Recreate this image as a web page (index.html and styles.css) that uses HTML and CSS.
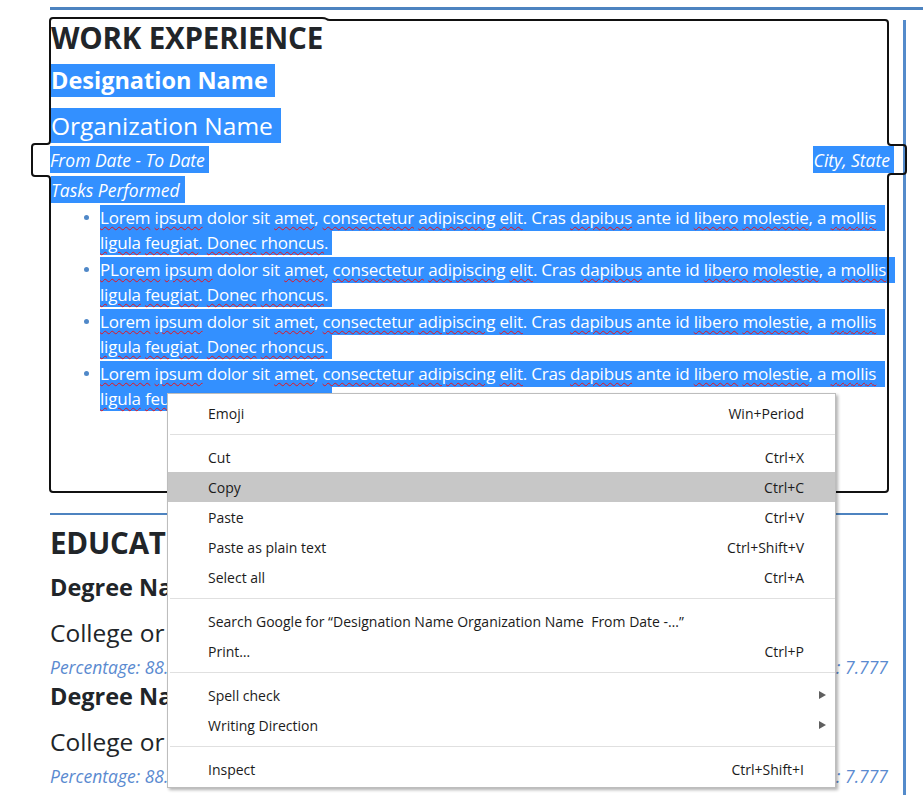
FILE: index.html
```html
<!DOCTYPE html>
<html lang="en">
<head>
<meta charset="utf-8">
<title>Resume editor</title>
<link rel="stylesheet" href="styles.css">
</head>
<body>
<div class="page">
  <div class="rule-top"></div>
  <div class="cols">
    <main class="main">
      <div class="editable">
        <h3 class="h-sec">WORK EXPERIENCE</h3>
        <h4 class="title hl pad-d">Designation Name</h4>
        <div class="org hl pad-o">Organization Name</div>
        <div class="date-row">
          <span class="it hl pad-f">From Date - To Date</span>
          <span class="it hl pad-c">City, State</span>
        </div>
        <div class="it hl pad-t gap3">Tasks Performed</div>
        <ul class="tasks">
          <li><span class="ln ln1"><span class="sp">Lorem</span> <span class="sp">ipsum</span> dolor sit <span class="sp">amet</span>, <span class="sp">consectetur</span> <span class="sp">adipiscing</span> <span class="sp">elit</span>. Cras <span class="sp">dapibus</span> ante id <span class="sp">libero</span> <span class="sp">molestie</span>, a <span class="sp">mollis</span></span><span class="ln ln2"><span class="sp">ligula</span> <span class="sp">feugiat</span>. <span class="sp">Donec</span> <span class="sp">rhoncus</span>.</span></li>
          <li><span class="ln ln1"><span class="sp">PLorem</span> <span class="sp">ipsum</span> dolor sit <span class="sp">amet</span>, <span class="sp">consectetur</span> <span class="sp">adipiscing</span> <span class="sp">elit</span>. Cras <span class="sp">dapibus</span> ante id <span class="sp">libero</span> <span class="sp">molestie</span>, a <span class="sp">mollis</span></span><span class="ln ln2"><span class="sp">ligula</span> <span class="sp">feugiat</span>. <span class="sp">Donec</span> <span class="sp">rhoncus</span>.</span></li>
          <li><span class="ln ln1"><span class="sp">Lorem</span> <span class="sp">ipsum</span> dolor sit <span class="sp">amet</span>, <span class="sp">consectetur</span> <span class="sp">adipiscing</span> <span class="sp">elit</span>. Cras <span class="sp">dapibus</span> ante id <span class="sp">libero</span> <span class="sp">molestie</span>, a <span class="sp">mollis</span></span><span class="ln ln2"><span class="sp">ligula</span> <span class="sp">feugiat</span>. <span class="sp">Donec</span> <span class="sp">rhoncus</span>.</span></li>
          <li><span class="ln ln1"><span class="sp">Lorem</span> <span class="sp">ipsum</span> dolor sit <span class="sp">amet</span>, <span class="sp">consectetur</span> <span class="sp">adipiscing</span> <span class="sp">elit</span>. Cras <span class="sp">dapibus</span> ante id <span class="sp">libero</span> <span class="sp">molestie</span>, a <span class="sp">mollis</span></span><span class="ln ln2"><span class="sp">ligula</span> <span class="sp">feugiat</span>. <span class="sp">Donec</span> <span class="sp">rhoncus</span>.</span></li>
        </ul>
        <svg class="outline" width="923" height="520" viewBox="0 0 923 520" aria-hidden="true">
          <path d="M53 18 H322 Q325 18 326.5 19 Q327.5 20 330 20 H885 Q888 20 888 23 V142 Q888 145 891 145 H903 Q906 145 906 148 V171 Q906 174 903 174 H891 Q888 174 888 177 V489 Q888 492 885 492 H53 Q50 492 50 489 V179 Q50 176 47 176 H35 Q32 176 32 173 V147 Q32 144 35 144 H47 Q50 144 50 141 V21 Q50 18 53 18 Z" fill="none" stroke="#111" stroke-width="2"/>
        </svg>
      </div>

      <section class="edu">
        <h3 class="h-sec">EDUCATION</h3>
        <div class="entry">
          <h4 class="title">Degree Name</h4>
          <div class="org">College or University Name</div>
          <div class="pct"><span>Percentage: 88.88%</span><span>CGPA: 7.777</span></div>
        </div>
        <div class="entry">
          <h4 class="title">Degree Name</h4>
          <div class="org">College or University Name</div>
          <div class="pct"><span>Percentage: 88.88%</span><span>CGPA: 7.777</span></div>
        </div>
      </section>
    </main>
    <aside class="side"></aside>
  </div>

  <div class="menu">
    <div class="mi"><span>Emoji</span><span>Win+Period</span></div>
    <div class="sep"></div>
    <div class="mi"><span>Cut</span><span>Ctrl+X</span></div>
    <div class="mi hot"><span>Copy</span><span>Ctrl+C</span></div>
    <div class="mi"><span>Paste</span><span>Ctrl+V</span></div>
    <div class="mi"><span>Paste as plain text</span><span>Ctrl+Shift+V</span></div>
    <div class="mi"><span>Select all</span><span>Ctrl+A</span></div>
    <div class="sep"></div>
    <div class="mi"><span>Search Google for “Designation Name Organization Name  From Date -…”</span></div>
    <div class="mi"><span>Print…</span><span>Ctrl+P</span></div>
    <div class="sep"></div>
    <div class="mi"><span>Spell check</span><span class="arrow"></span></div>
    <div class="mi"><span>Writing Direction</span><span class="arrow"></span></div>
    <div class="sep"></div>
    <div class="mi"><span>Inspect</span><span>Ctrl+Shift+I</span></div>
  </div>
</div>
</body>
</html>
```

FILE: styles.css
```css
html, body {
  margin: 0;
  padding: 0;
  background: #fff;
}
body {
  font-family: "Open Sans", "Noto Sans", sans-serif;
  color: #212529;
}
.page {
  position: relative;
  box-sizing: border-box;
  height: 795px;
  overflow: hidden;
  padding: 7px 0 0 49px;
  display: flex;
  flex-direction: column;
}
.rule-top {
  flex: none;
  height: 3px;
  margin-left: 1px;
  background: #4d83c0;
}
.cols {
  flex: 1;
  display: flex;
  margin-top: 7px;
}
.main {
  flex: none;
  width: 840px;
}
.side {
  flex: none;
  width: 3px;
  margin: 3px 0 0 14px;
  background: #548bcb;
}

/* editable work block */
.editable {
  position: relative;
  box-sizing: border-box;
  height: 476px;
  padding: 2px 0 0 2px;
}
.outline {
  position: absolute;
  left: -49px;
  top: -17px;
  overflow: visible;
  pointer-events: none;
}
.h-sec {
  margin: 0;
  font-size: 29.5px;
  font-weight: 700;
  letter-spacing: -0.2px;
  line-height: 38px;
  color: #212529;
}
.title {
  margin: 7px 0 0;
  font-size: 23.5px;
  font-weight: 700;
  line-height: 33px;
}
.org {
  margin-top: 11px;
  font-size: 24.5px;
  font-weight: 400;
  line-height: 35px;
}
.it {
  display: block;
  font-size: 17.5px;
  font-style: italic;
  line-height: 26px;
  padding-top: 1px;
}
.hl {
  width: max-content;
  background: #3390ff;
  color: #fff;
}
.pad-d { padding-right: 7px; }
.pad-o { padding-right: 8px; }
.pad-f { padding-right: 4px; }
.pad-c { padding-right: 4px; padding-left: 1px; }
.pad-t { padding-right: 5px; }
.gap3 { margin-top: 3px; }

.date-row {
  display: flex;
  justify-content: space-between;
  margin: 3px -5px 0 -1px;
}

.tasks {
  margin: 2px 0 0;
  padding: 0 0 0 49px;
  list-style: none;
}
.tasks li {
  position: relative;
  margin-bottom: 2px;
  font-size: 17px;
  letter-spacing: -0.2px;
}
.tasks li::before {
  content: "";
  position: absolute;
  left: -16px;
  top: 10px;
  width: 5px;
  height: 5px;
  border-radius: 50%;
  background: #5088c8;
}
.ln {
  display: block;
  width: max-content;
  white-space: nowrap;
  background: #3390ff;
  color: #fff;
}
.ln1 { line-height: 26px; padding-right: 9px; }
.ln2 { line-height: 24px; padding-right: 4px; }
.sp {
  text-decoration: underline wavy #e8141c;
  text-decoration-thickness: 1.3px;
  text-underline-offset: 2px;
}

/* education */
.edu {
  width: 838px;
  margin: 20px 0 0 1px;
  border-top: 2px solid #4d83c0;
}
.edu .h-sec { margin-top: 9px; }
.edu .title { margin-top: 9px; }
.edu .entry + .entry .title { margin-top: 0; }
.pct {
  display: flex;
  justify-content: space-between;
  margin-top: 3px;
  padding-top: 1px;
  font-size: 17.5px;
  font-style: italic;
  line-height: 26px;
  color: #5a8ad0;
}

/* context menu */
.menu {
  position: absolute;
  left: 167px;
  top: 393px;
  width: 669px;
  box-sizing: border-box;
  padding: 4px 0 3px;
  border: 1px solid #bdbdbd;
  background: #fff;
  box-shadow: 2px 2px 3px rgba(0, 0, 0, 0.3);
  font-family: "Open Sans", "Noto Sans", sans-serif;
  font-size: 14px;
  color: #1b1b1b;
}
.mi {
  display: flex;
  justify-content: space-between;
  align-items: center;
  height: 30px;
  padding: 0 31px 0 40px;
  white-space: pre;
}
.mi.hot {
  background: #c7c7c7;
}
.sep {
  height: 1px;
  margin: 6px 0 7px 2px;
  background: #e0e0e0;
}
.arrow {
  width: 0;
  height: 0;
  margin-right: -22px;
  border-left: 7px solid #5f5f5f;
  border-top: 4.5px solid transparent;
  border-bottom: 4.5px solid transparent;
}
```
